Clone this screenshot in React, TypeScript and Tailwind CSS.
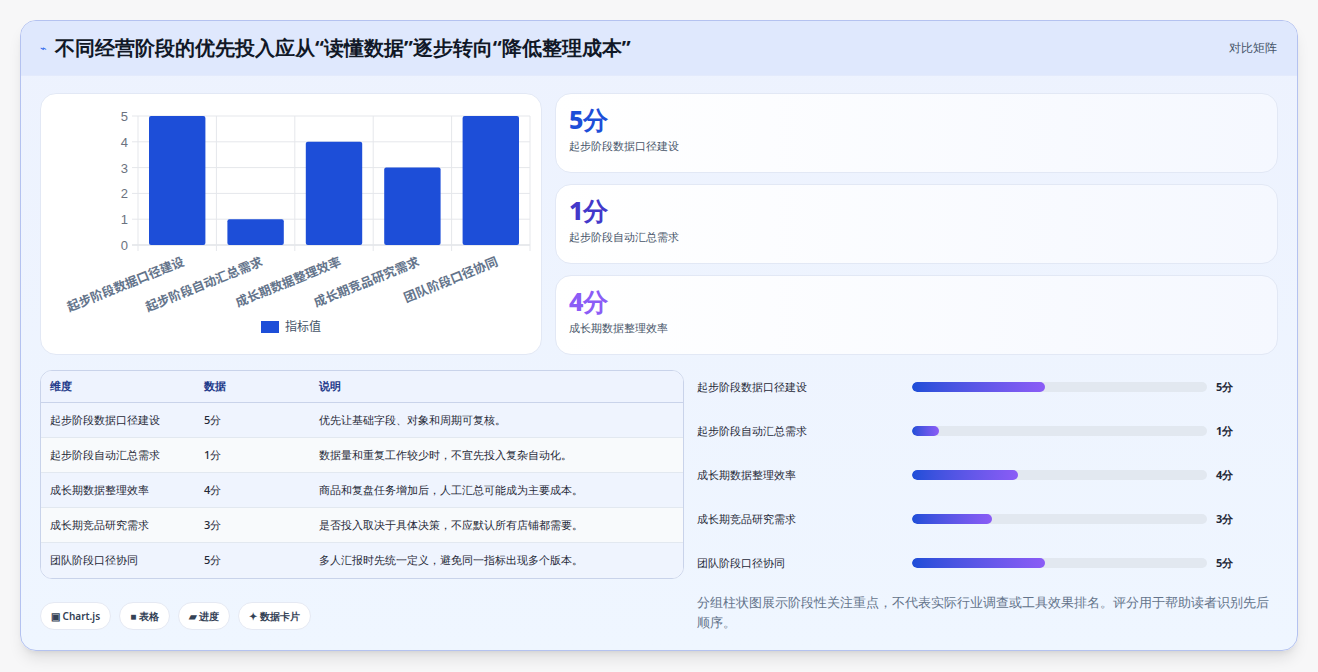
import React from "react";

const rows = [
  ["起步阶段数据口径建设", 5, "优先让基础字段、对象和周期可复核。"],
  ["起步阶段自动汇总需求", 1, "数据量和重复工作较少时，不宜先投入复杂自动化。"],
  ["成长期数据整理效率", 4, "商品和复盘任务增加后，人工汇总可能成为主要成本。"],
  ["成长期竞品研究需求", 3, "是否投入取决于具体决策，不应默认所有店铺都需要。"],
  ["团队阶段口径协同", 5, "多人汇报时先统一定义，避免同一指标出现多个版本。"],
] as const;

function Chart() {
  const x0 = 97, x1 = 489, y0 = 22, y1 = 151;
  const cw = (x1 - x0) / 5;
  const h = (y1 - y0) / 5;
  return (
    <svg width="500" height="260" className="block">
      {[0, 1, 2, 3, 4, 5].map((i) => (
        <g key={i}>
          <line x1={x0 - 6} x2={x1} y1={y1 - i * h} y2={y1 - i * h} stroke={i === 0 ? "#d1d5db" : "#e5e7eb"} />
          <text x={x0 - 10} y={y1 - i * h + 5} textAnchor="end" fontSize="13" fill="#6b7280" fontFamily="Liberation Sans, sans-serif">{i}</text>
        </g>
      ))}
      {[0, 1, 2, 3, 4, 5].map((i) => (
        <line key={i} x1={x0 + i * cw} x2={x0 + i * cw} y1={y0} y2={y1 + 6} stroke="#e5e7eb" />
      ))}
      {rows.map((r, i) => {
        const bh = r[1] * h;
        return (
          <g key={i}>
            <rect x={x0 + i * cw + 11} y={y1 - bh} width={cw - 22} height={bh} rx="2" fill="#1d4ed8" />
            <text transform={`translate(${x0 + i * cw + cw / 2 + 8},${y1 + 20}) rotate(-22)`} textAnchor="end" fontSize="12.5" fontWeight="600" fill="#64748b" fontFamily="Noto Sans CJK SC, sans-serif">{r[0]}</text>
          </g>
        );
      })}
      <rect x="220" y="227" width="18" height="12" fill="#1d4ed8" />
      <text x="244" y="237" fontSize="12" fill="#475569" fontFamily="Noto Sans CJK SC, sans-serif">指标值</text>
    </svg>
  );
}

export default function App() {
  const cards = [
    ["5分", "起步阶段数据口径建设", "text-[#1d4ed8]"],
    ["1分", "起步阶段自动汇总需求", "text-[#4338ca]"],
    ["4分", "成长期数据整理效率", "text-[#8b5cf6]"],
  ];
  return (
    <div className="w-[1318px] h-[672px] bg-[#f7f7f8] pt-5 pl-5 font-['Noto_Sans_CJK_SC',sans-serif]">
      <div className="w-[1278px] h-[631px] rounded-2xl border border-[#b4c2f0] bg-gradient-to-b from-[#edf2fe] to-[#eff6ff] shadow-lg overflow-hidden">
        <div className="h-[55px] bg-[#dfe8fd] flex items-center justify-between pl-[19px] pr-5 border-b border-[#e3eafc]">
          <div className="flex items-center gap-2">
            <span className="text-[#2563eb] text-[11px]">⌁</span>
            <span className="text-[20px] font-bold text-[#111827]">不同经营阶段的优先投入应从“读懂数据”逐步转向“降低整理成本”</span>
          </div>
          <span className="text-[12px] text-[#475569]">对比矩阵</span>
        </div>
        <div className="px-[19px] pt-[17px]">
          <div className="flex gap-[13px]">
            <div className="w-[502px] h-[262px] bg-white rounded-2xl border border-[#e2e8f5]">
              <Chart />
            </div>
            <div className="flex-1 flex flex-col gap-[11px]">
              {cards.map((c) => (
                <div key={c[0]} className="h-[80px] rounded-2xl border border-[#e2e8f5] bg-gradient-to-r from-white to-[#f5f8ff] px-[13px] pt-[9px]">
                  <div className={`text-[25px] font-extrabold leading-[32px] ${c[2]}`}>{c[0]}</div>
                  <div className="text-[11px] text-[#475569] mt-[3px]">{c[1]}</div>
                </div>
              ))}
            </div>
          </div>
          <div className="flex gap-[13px] mt-[15px]">
            <div className="w-[644px]">
              <div className="rounded-xl border border-[#c9d3ea] overflow-hidden bg-white">
                <div className="flex h-[32px] items-center bg-[#eef3fe] border-b border-[#c9d3ea] text-[11px] font-bold text-[#1e3a8a]">
                  <div className="w-[163px] pl-[9px]">维度</div>
                  <div className="w-[115px]">数据</div>
                  <div>说明</div>
                </div>
                {rows.map((r, i) => (
                  <div key={i} className={`flex h-[35px] items-center text-[11px] font-medium text-[#1f2937] ${i < 4 ? "border-b border-[#e2e8f0]" : ""} ${i % 2 ? "bg-[#f8fafc]" : "bg-[#eff4fe]"}`}>
                    <div className="w-[163px] pl-[9px]">{r[0]}</div>
                    <div className="w-[115px]">{r[1]}分</div>
                    <div>{r[2]}</div>
                  </div>
                ))}
              </div>
              <div className="flex gap-[8px] mt-[23px]">
                {["▣ Chart.js", "■ 表格", "▰ 进度", "✦ 数据卡片"].map((t) => (
                  <span key={t} className="h-[28px] px-[10px] flex items-center rounded-full bg-white border border-[#e5e9f3] text-[10px] font-semibold text-[#334155]">{t}</span>
                ))}
              </div>
            </div>
            <div className="flex-1">
              <div className="flex flex-col gap-[24px] pt-[7px]">
                {rows.map((r, i) => (
                  <div key={i} className="flex items-center h-[20px]">
                    <div className="w-[215px] text-[11px] font-medium text-[#1f2937]">{r[0]}</div>
                    <div className="w-[295px] h-[10px] rounded-full bg-[#e2e8f0] overflow-hidden">
                      <div className="h-full rounded-full bg-gradient-to-r from-[#1d4ed8] to-[#8b5cf6]" style={{ width: `${r[1] * 9}%` }} />
                    </div>
                    <div className="ml-[9px] text-[11px] font-bold text-[#1f2937]">{r[1]}分</div>
                  </div>
                ))}
              </div>
              <p className="mt-[19px] text-[13px] leading-[20px] text-[#64748b] font-medium">分组柱状图展示阶段性关注重点，不代表实际行业调查或工具效果排名。评分用于帮助读者识别先后顺序。</p>
            </div>
          </div>
        </div>
      </div>
    </div>
  );
}
